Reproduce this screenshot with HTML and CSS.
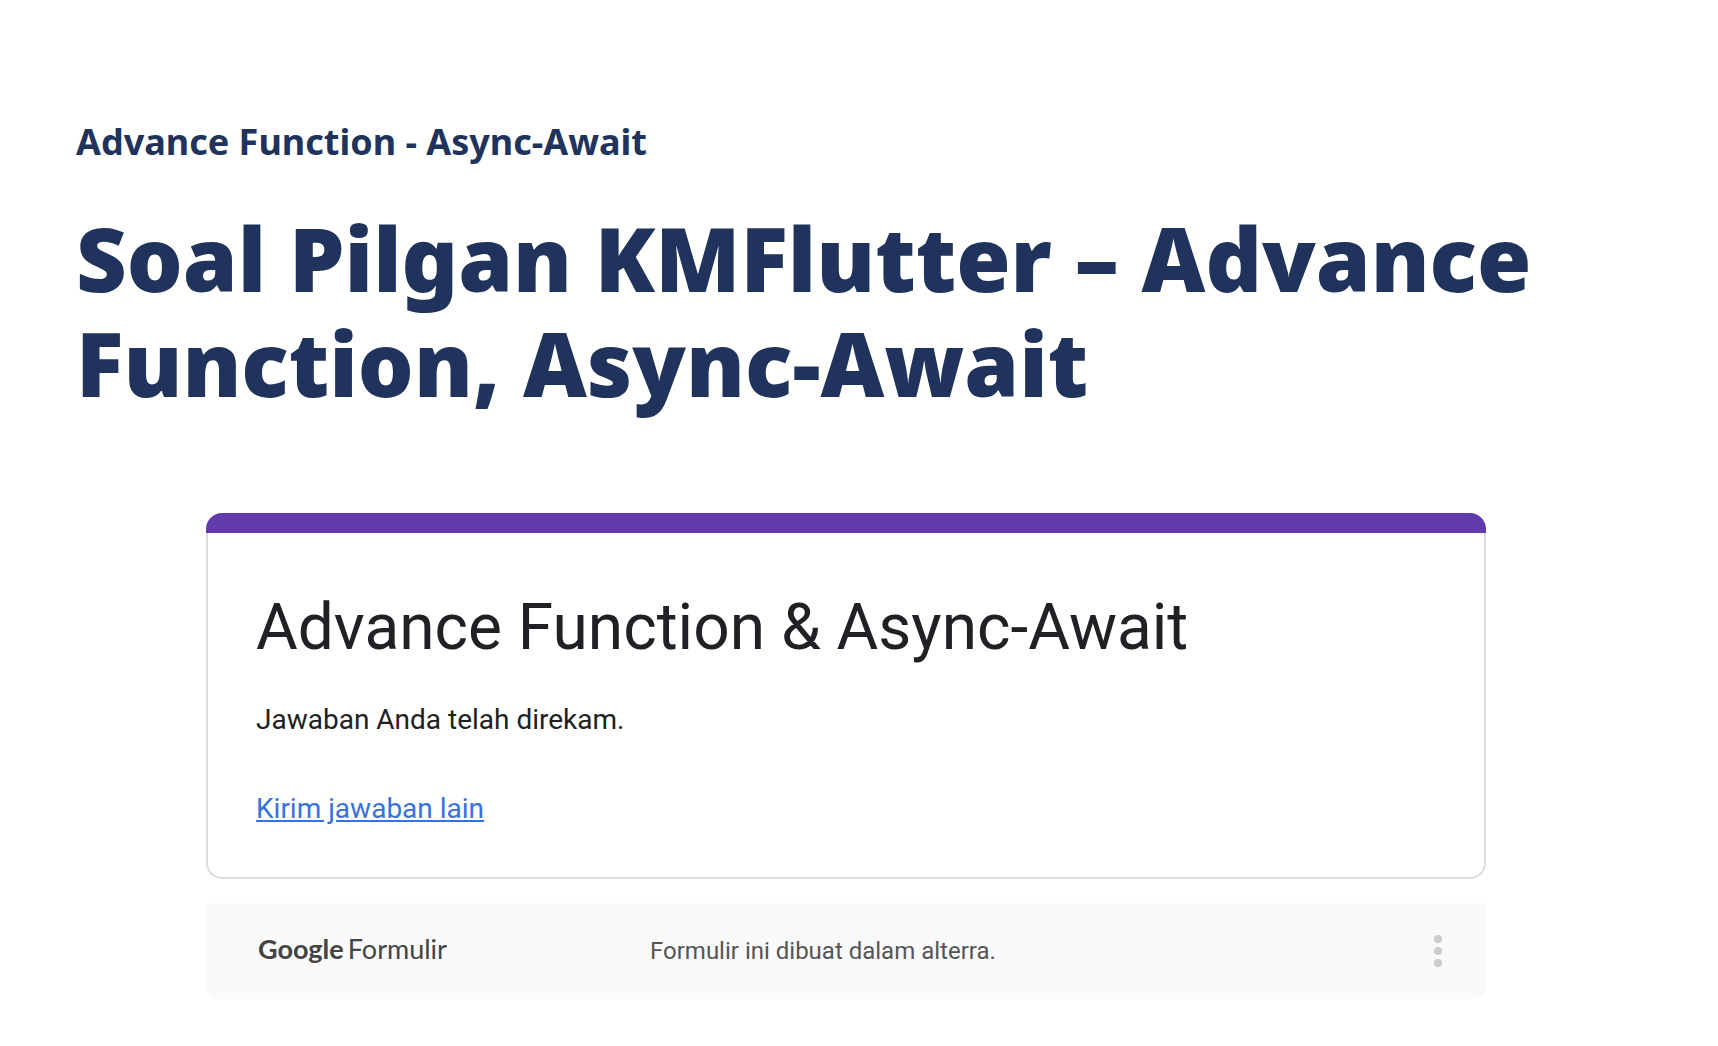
FILE: index.html
```html
<!DOCTYPE html>
<html lang="id">
<head>
<meta charset="utf-8">
<meta name="viewport" content="width=device-width, initial-scale=1">
<title>Advance Function - Async-Await</title>
<link rel="stylesheet" href="styles.css">
</head>
<body>
<main class="page">
  <header class="lesson">
    <p class="lesson-section">Advance Function - Async-Await</p>
    <h1 class="lesson-title">Soal Pilgan KMFlutter – Advance Function, Async-Await</h1>
  </header>
  <div class="form">
    <section class="card">
      <div class="card-body">
        <h2 class="card-title">Advance Function &amp; Async-Await</h2>
        <p class="card-message">Jawaban Anda telah direkam.</p>
        <a class="card-link" href="#">Kirim jawaban lain</a>
      </div>
    </section>
    <footer class="form-footer">
      <a class="brand" href="#"><span class="brand-google">Google</span><span class="brand-product">Formulir</span></a>
      <p class="form-note">Formulir ini dibuat dalam alterra.</p>
      <button class="menu" type="button" aria-label="Menu">
        <svg width="8" height="32" viewBox="0 0 8 32" fill="currentColor" aria-hidden="true">
          <circle cx="4" cy="4" r="4"/><circle cx="4" cy="16" r="4"/><circle cx="4" cy="28" r="4"/>
        </svg>
      </button>
    </footer>
  </div>
</main>
</body>
</html>
```
FILE: styles.css
```css
* {
  box-sizing: border-box;
}

body {
  margin: 0;
  background: #fff;
}

h1,
h2,
p {
  margin: 0;
}

.page {
  padding: 118px 102px 47px 76px;
}

.lesson {
  color: #20335c;
}

.lesson-section {
  font: 700 36px/48px "Noto Sans", sans-serif;
}

.lesson-title {
  margin-top: 40px;
  font: 900 88px/105px "Noto Sans", sans-serif;
}

.form {
  max-width: 1280px;
  margin: 97px auto 0;
  font-family: Roboto, sans-serif;
}

.card::before {
  content: "";
  display: block;
  height: 20px;
  border-radius: 16px 16px 0 0;
  background: #613bae;
}

.card-body {
  padding: 55px 48px 48px;
  border: 2px solid #dadce0;
  border-top: 0;
  border-radius: 0 0 16px 16px;
  color: #202124;
}

.card-title {
  font-size: 64px;
  font-weight: 400;
  line-height: 80px;
}

.card-message {
  margin-top: 32px;
  font-size: 28px;
  line-height: 40px;
}

.card-link {
  display: inline-block;
  margin-top: 49px;
  color: #3871e0;
  font-size: 28px;
  line-height: 40px;
}

.form-footer {
  display: flex;
  align-items: center;
  height: 96px;
  margin-top: 24px;
  padding: 0 44px 0 52px;
  border-radius: 0 0 12px 12px;
  background: #fafafa;
}

.brand {
  display: flex;
  gap: 4px;
  flex: 0 0 392px;
  padding-bottom: 4px;
  color: #444;
  font: 400 27px/40px Lato, sans-serif;
  text-decoration: none;
}

.brand-google {
  font-weight: 700;
}

.form-note {
  flex: 1;
  color: #555;
  font-size: 24px;
  line-height: 40px;
}

.menu {
  display: flex;
  padding: 0;
  border: 0;
  background: none;
  color: #ccc;
  cursor: pointer;
}
```
